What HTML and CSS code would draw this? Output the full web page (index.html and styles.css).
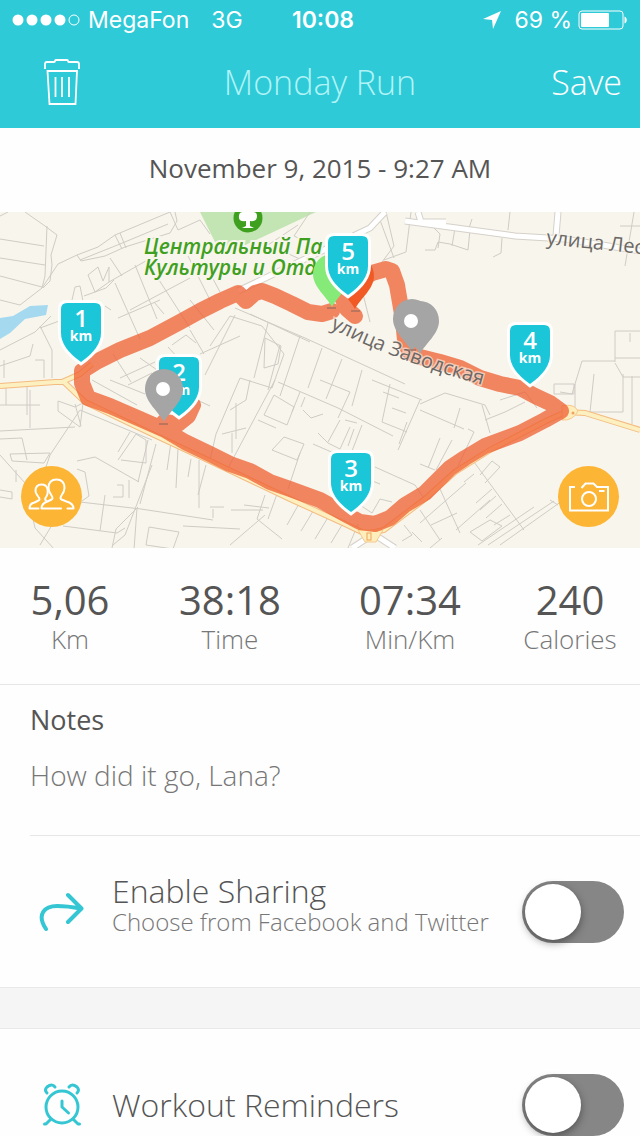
FILE: index.html
```html
<!DOCTYPE html>
<html lang="en">
<head>
    <meta charset="UTF-8">
    <meta name="viewport" content="width=device-width, initial-scale=1.0">
    <title>Monday Run</title>
    <link rel="stylesheet" href="styles.css">
</head>
<body>

    <div class="screen">
        <header class="header">
            <div class="status-bar">
                <div class="status-left">
                    <svg class="signal" width="68" height="12" viewBox="0 0 68 12">
                        <circle cx="6" cy="6" r="5.5"/>
                        <circle cx="20" cy="6" r="5.5"/>
                        <circle cx="34" cy="6" r="5.5"/>
                        <circle cx="48" cy="6" r="5.5"/>
                        <circle class="signal-empty" cx="62" cy="6" r="5"/>
                    </svg>
                    <span>MegaFon</span>
                    <span class="network">3G</span>
                </div>
                <span class="clock">10:08</span>
                <div class="status-right">
                    <svg width="20" height="20" viewBox="0 0 20 20"><path d="M19 1 11 19 10 10 1 9z" fill="#fff"/></svg>
                    <span class="percent">69 %</span>
                    <svg width="50" height="20" viewBox="0 0 50 20">
                        <rect x="1" y="1" width="44" height="18" rx="3" fill="none" stroke="#fff"/>
                        <rect x="3" y="3" width="28" height="14" rx="1" fill="#fff"/>
                        <path d="M46.500 6.500c3 1 3 6 0 7z" fill="#fff"/>
                    </svg>
                </div>
            </div>
            <nav class="nav">
                <button class="nav-delete" aria-label="Delete workout">
                    <svg width="36" height="48" viewBox="0 0 36 48" fill="none" stroke="#fff" stroke-width="1.800">
                        <path d="M1 11V6q0-2 2-2h7q1 0 1-1t1-1h11q1 0 1 1t1 1h8q2 0 2 2v5"/>
                        <path d="M3.500 13h29.500L31.500 46h-26z"/>
                        <path d="M11.500 19v20M18 19v20M25 19v20"/>
                    </svg>
                </button>
                <h1 class="nav-title">Monday Run</h1>
                <button class="nav-save">Save</button>
            </nav>
        </header>

        <p class="date">November 9, 2015 - 9:27 AM</p>

        <section class="map">
            <svg class="map-canvas" viewBox="0 212 640 336">
                <defs>
                    <path id="shield" d="M-14-59H14q6 0 6 6V-29Q20-14 0 0Q-20-14-20-29V-53q0-6 6-6z"/>
                    <path id="drop" d="M0 0C-5-10-19-20-19-33A19 20 0 0 1 19-33C19-20 5-10 0 0z"/>
                    <path id="zavodskaya" d="M330 328Q400 363 490 387"/>
                </defs>

                <path class="park" d="M200 212l22 44 94-44z"/>
                <path class="water" d="M0 318l13-2 17-10 18-1-2 10-21 4-15 14-10 6z"/>

                <!-- side streets -->
                <g class="streets">
                    <path d="M0 216l8-4M25 212l20 14 12 9-6 20 1 10-2 16-7 7M47 226l-2 50-3 12-22 17-20-5M0 239l44 7M0 258l45 7M0 276l42 11"/>
                    <path d="M42 288l16-24 19-9 21-8 17-12 55-23M77 255l4 6 24-5 20-9 45-14 7-12-2-9M80 260l40-16 48-20M115 235l7 14M120 233l6 15M170 212l8 18 22-10 10 14M110 258l12 18"/>
                    <path d="M88 275l10-8 5 14 6-14 0 15-14 10zM72 300l3-13 5-1 3 15M84 296l22-8 8-8M109 282l70-40M115 283l25 56M135 265l22 54M105 306l6 4M0 350l35-18 16-16M40 326l12 24v28M40 328l22-8M0 366l30-10 3-12M35 360h9v18M4 360v18M130 310l60-32M150 266l40 62M180 240l30 60M118 318l42-18"/>
                    <path d="M154 302l10 12M190 300l24 30M204 262l16 30M113 354l18 28M168 347l24 26M172 345l14-10 10 8M120 378l35-16M200 354l40-18M205 375l30-60M140 358l40 28M190 330l14 24"/>
                    <path d="M210 346l20-30 32 10 22 28-12 34-32-10M265 338l16 8-3 18-14 4zM235 308l70 30 100 46M250 314l60 28M280 345l-12 45M268 323l-14 55M300 336l-20 60M322 348l-14 40M342 359l-16 40M362 370l-10 36"/>
                    <path d="M310 212l-16 24 25 12M298 225l-45 30M280 250l22 10 30-14M330 235l25 12M360 282l10 40M386 212l8 34-12 16M380 220l14 38M384 260l22-8 5-40M425 250h10l3-8 12 2 18 6 2-20M432 226l8 8-2 14M455 228l-3 18M468 231l4-12M502 238l-1 15-8 4M508 230l2-18M634 212l-9 54M620 226h20"/>
                    <path d="M615 362v-31h25M630 333v9M615 358h25M615 363l8 14h17M582 361h33M582 361l-7 23M594 374l-4 38h33v-38M575 384l-3 10-12-2M554 384h20v10h-20zM575 384v27M632 376v48M0 405h40M6 384v21M27 382v33M30 390v38M0 431l75-4M58 401l17 6 8-4-3 24-22-16zM0 439l22-1 5 22M80 410l-30 45-4 12M10 454l40-1-6 10-32-2zM16 470v12"/>
                    <path d="M0 455l25 28 10 45 20 22M52 525l-12 20M0 490l12 2v7l-12-2M75 404l6 22M92 380l45 25M110 380l35 14M128 385l24-12M150 378l60 28M80 410l72 30M130 432l-12 20M118 460l18-26 10 6v23l-25-3M148 440l-10 42M156 444l-16 60M77 469l8 3 4 24-7 5M77 461l18-4 44 25M80 502l61 7 72 11M63 526l54 7 8-5M105 495l-5 36M117 485h6v12h-10M129 480v18M138 507l-22 22-4 19M152 465l-27 70-12 10M137 508l-3 42M146 545l3-18 30 5-6 17zM171 442l-4 28M178 448l-2 40M191 459l-3 18M199 460v48M206 465l-8 30M213 509v9M183 526l57 3"/>
                    <path d="M240 378l-24 56-6 26M275 380l-48 90M250 380l-4 20-16 10M236 403v36M222 434l24-6M232 433v20M274 395l20 12-7 18-23-10zM258 420l18 8M300 392l-8 20M320 380l30 12-12 26M278 382l60 26 55 28M303 410l8 8 12-4M305 397l-4 10M340 420l-12 22M345 420l12 3M318 433l10 10 12 6 10-22M348 446l6-17M284 437l20 7-7 16-25-10zM300 453l-12 36M313 444l30 13M362 425l-10 26M372 380l50 20M390 384l-8 38 25 10M383 392l16 6M392 408l14 5M420 400l-22 50M407 422l-8 22"/>
                    <path d="M375 467l40 18 8 12M370 480l10 4M265 495l-8 24 25 20M231 510h32M265 515l-35 30M210 507h14M244 505l25 3M277 494l-9 25M300 502l-13 23M315 508l-14 23M330 514l-15 25M345 520l-14 23M358 524l-10 24M360 505l12 8 8-14 12 3M404 525l8 10-10 6M412 532l10 10"/>
                    <path d="M420 404l25-11 40 12 5 10M420 410l44 19M460 408l-6 20M482 405l8 28M485 420l20-8 20-10M468 429l6 3-16 34M440 438l-12 30M452 440l-16 30M420 464l15 6M474 462l50 68M440 489l20 44M420 523l46-40M431 525l26-12M456 530l34-30M464 482l10-8M476 503l16-14M480 510l16-14M486 518l16-14M494 525l16-10M478 545l56-38M488 545l66-44M500 545l62-44M470 532l20-12 12 6-20 15z"/>
                    <path d="M420 510l20 30M430 548l12-10M480 475l12-14 8 6-15 16M550 500l8 5M500 400l25-8 12 16"/>
                </g>

                <!-- main roads -->
                <path class="road-edge" d="M238 291L370 228 385 212M405 221l110 15 50 3 75 12M558 212l-2 24M418 212l3 10h25M372 535l-20 13M375 535l20 13"/>
                <path class="road" d="M238 291L370 228 385 212M405 221l110 15 50 3 75 12M558 212l-2 24M418 212l3 10h25M372 535l-20 13M375 535l20 13"/>
                <path class="highway-edge" d="M0 386L55 382 64 382 85 402 150 433 210 461 290 499 345 524 366 534 384 530 425 499 455 472 490 450 548 420 566 412 585 413 640 430M62 382L80 374 92 364"/>
                <path class="highway" d="M0 386L55 382 64 382 85 402 150 433 210 461 290 499 345 524 366 534 384 530 425 499 455 472 490 450 548 420 566 412 585 413 640 430M62 382L80 374 92 364"/>
                <path class="junction" d="M358 530h25l-7 12h-11zM562 406q12-3 16 5-5 10-16 9z"/>
                <rect x="367" y="533" width="4" height="7" fill="none" stroke="#f0a35c"/>
                <circle cx="573" cy="413" r="1.500" fill="#f0a35c"/>

                <text class="label" x="546" y="244" transform="rotate(6 546 244)">улица Лес</text>

                <path class="route" d="M332 311L322 314 308 312 292 304 275 296 262 291 255 293 246 301 238 293 220 301 200 311 180 322 150 338 120 350 98 361 82 371 82 383 88 398 110 406 140 419 165 430 185 442 210 454 230 464 250 471 270 482 290 489 320 500 345 514 360 522 375 524 390 518 405 505 425 493 450 468 465 458 485 446 520 433 545 420 561 411 550 403 535 396 520 388 500 384 480 378 460 368 440 362 420 357 409 352 405 340 403 320 397 285 392 271 386 269 372 273 355 283 342 297 347 309 355 316M164 422L178 424 188 416 193 405"/>

                <text class="label"><textPath href="#zavodskaya">улица Заводская</textPath></text>

                <g class="park-label">
                    <circle cx="248" cy="218" r="14.500"/>
                    <path d="M246 226v-5q-8 1-7-5 0-4 4-4 1-5 5-5t5 5q4 0 4 4 0 6-7 5v5l4 2h-12z" fill="#fff"/>
                    <text x="144" y="254">Центральный Па</text>
                    <text x="144" y="275">Культуры и Отд</text>
                </g>

                <use class="pin-start" href="#drop" x="332" y="307"/>
                <use class="pin-finish" href="#drop" x="355" y="309"/>

                <g class="km" transform="translate(81 362)">
                    <use href="#shield"/>
                    <text class="km-number" y="-35">1</text>
                    <text class="km-unit" y="-21">km</text>
                </g>
                <g class="km" transform="translate(179 416)">
                    <use href="#shield"/>
                    <text class="km-number" y="-35">2</text>
                    <text class="km-unit" y="-21">km</text>
                </g>
                <g class="km" transform="translate(351 512)">
                    <use href="#shield"/>
                    <text class="km-number" y="-35">3</text>
                    <text class="km-unit" y="-21">km</text>
                </g>
                <g class="km" transform="translate(530 384)">
                    <use href="#shield"/>
                    <text class="km-number" y="-35">4</text>
                    <text class="km-unit" y="-21">km</text>
                </g>
                <g class="km" transform="translate(348 295)">
                    <use href="#shield"/>
                    <text class="km-number" y="-35">5</text>
                    <text class="km-unit" y="-21">km</text>
                </g>

                <g class="pin-photo">
                    <use href="#drop" x="164" y="422"/>
                    <use href="#drop" x="420" y="354"/>
                    <use href="#drop" x="412" y="352"/>
                    <circle cx="163" cy="389" r="7"/>
                    <circle cx="411" cy="321" r="7"/>
                    <path d="M159 424h9M407 350h9M327 308h9M351 311h9" stroke="#9b6a5c" stroke-width="2" opacity=".6"/>
                </g>
            </svg>

            <div class="map-actions">
                <button class="map-button" aria-label="Tag friends">
                    <svg width="48" height="48" viewBox="0 0 48 48" fill="none" stroke="#fff" stroke-width="2" stroke-linejoin="round" stroke-linecap="round">
                        <path d="M33 35.500h-19.500q0-5 6-7l4-2q2-1 0-4-3-4-3-7.500 0-8.500 8-8.500t8 8.500q0 3.500-3 7.500-2 3 0 4l5 2q7 2 7 7h-6"/>
                        <path d="M10.500 35.500H1.500q0-5 5-6l4-2q2-1 0-3.500-3-4-3-6 0-6.500 6-6.500 5 0 6 4.500 1 5-2 9-1 2 1 3"/>
                    </svg>
                </button>
                <button class="map-button" aria-label="Add photo">
                    <svg width="48" height="48" viewBox="0 0 48 48" fill="none" stroke="#fff" stroke-width="2">
                        <path d="M10 14H5v23.500h38V14H32l-3.500-3.500h-8L16.500 15"/>
                        <circle cx="24" cy="26" r="7"/>
                        <path d="M34 18h5.500"/>
                    </svg>
                </button>
            </div>
        </section>

        <dl class="stats">
            <div class="stat"><dt>Km</dt><dd>5,06</dd></div>
            <div class="stat"><dt>Time</dt><dd>38:18</dd></div>
            <div class="stat"><dt>Min/Km</dt><dd>07:34</dd></div>
            <div class="stat"><dt>Calories</dt><dd>240</dd></div>
        </dl>

        <section class="notes">
            <label class="notes-label" for="notes">Notes</label>
            <input class="notes-input" id="notes" type="text" placeholder="How did it go, Lana?">
        </section>

        <div class="option">
            <svg class="option-icon" width="48" height="48" viewBox="0 0 48 48">
                <path d="M9 41C-1 26 8 18 20 18q10 0 24 2.500M31 7l13.500 13.500L31 34"/>
            </svg>
            <label class="option-text" for="sharing">
                <span class="option-title">Enable Sharing</span>
                <span class="option-hint">Choose from Facebook and Twitter</span>
            </label>
            <input class="toggle" id="sharing" type="checkbox" role="switch">
        </div>

        <div class="divider"></div>

        <div class="option">
            <svg class="option-icon thin" width="48" height="48" viewBox="0 0 48 48">
                <circle cx="25" cy="26" r="16"/>
                <path d="M25 20v6l6.500 6M14 38l-5 5H7.500M36 38l5 5h1.500"/>
                <path d="M10 12q-3-3 0-6 5-4 8 0M40 12q3-3 0-6-5-4-8 0"/>
            </svg>
            <label class="option-text" for="reminders">
                <span class="option-title">Workout Reminders</span>
            </label>
            <input class="toggle" id="reminders" type="checkbox" role="switch">
        </div>
    </div>

</body>
</html>
```

FILE: styles.css
```css
* {
    margin: 0;
    padding: 0;
    box-sizing: border-box;
}

body {
    font-family: "Open Sans", "Noto Sans", sans-serif;
    color: #555;
    background-color: #fefefe;
}

button {
    background: none;
    border: none;
    color: white;
    font-family: inherit;
    cursor: pointer;
}

svg {
    display: block;
}

.screen {
    height: 100vh;
    overflow-y: auto;
    scrollbar-width: none;
}

/* header */
.header {
    background-color: #2ecad7;
    color: white;
}

.status-bar {
    display: grid;
    grid-template-columns: 1fr auto 1fr;
    align-items: center;
    height: 40px;
    padding: 0 12px;
    font-family: Inter, sans-serif;
    font-size: 23px;
}

.status-left,
.status-right {
    display: flex;
    align-items: center;
    gap: 8px;
}

.status-right {
    justify-content: flex-end;
    gap: 6px;
}

.status-right svg:first-child {
    margin-right: 6px;
}

.signal {
    fill: white;
}

.signal-empty {
    fill: none;
    stroke: white;
}

.network {
    margin-left: 14px;
}

.clock {
    font-weight: 600;
    padding-left: 6px;
}

.nav {
    display: grid;
    grid-template-columns: 1fr auto 1fr;
    align-items: center;
    height: 88px;
    padding: 0 18px 4px;
}

.nav-delete {
    justify-self: start;
    margin-left: 26px;
}

.nav-title,
.nav-save {
    font-size: 34px;
    font-weight: 300;
    line-height: 44px;
}

.nav-title {
    color: #b0f3f6;
}

.nav-save {
    justify-self: end;
}

.date {
    padding: 22px 0 26px;
    font-size: 26px;
    line-height: 36px;
    text-align: center;
}

/* map */
.map {
    position: relative;
    background-color: #f8f5ec;
}

.map-canvas {
    width: 100%;
}

.park { fill: #c3e5b3; }
.water { fill: #a5d9ef; }
.junction { fill: #fdeebb; stroke: #f6c98c; }

.streets {
    fill: none;
    stroke: #cfccc5;
    stroke-width: 1;
}

.road-edge {
    fill: none;
    stroke: #d5d1ca;
    stroke-width: 7;
}

.road {
    fill: none;
    stroke: white;
    stroke-width: 5;
}

.highway-edge {
    fill: none;
    stroke: #f4bb80;
    stroke-width: 6;
}

.highway {
    fill: none;
    stroke: #fdf0c0;
    stroke-width: 4;
}

.route {
    fill: none;
    stroke: #ef5f32;
    stroke-width: 16;
    stroke-linejoin: round;
    stroke-linecap: round;
    opacity: 0.75;
}

.label {
    font-size: 20px;
    fill: #6b6866;
    stroke: #f8f5ec;
    stroke-width: 3;
    stroke-opacity: 0.6;
    paint-order: stroke;
}

.park-label {
    font-size: 21px;
    font-weight: 600;
    font-style: italic;
    fill: #3fa01f;
}

.park-label text {
    stroke: #f8f5ec;
    stroke-width: 4;
    paint-order: stroke;
}

.pin-start { fill: #85ea78; }
.pin-finish { fill: #f15a24; }
.pin-photo { fill: #a5a5a5; }
.pin-photo circle { fill: white; }

.km use {
    fill: #1bc6d8;
    stroke: white;
    stroke-width: 6;
    paint-order: stroke;
}

.km text {
    fill: white;
    text-anchor: middle;
}

.km-number {
    font-size: 24px;
    font-weight: 600;
}

.km-unit {
    font-size: 14px;
    font-weight: 700;
}

.map-actions {
    position: absolute;
    left: 21px;
    right: 21px;
    bottom: 21px;
    display: flex;
    justify-content: space-between;
}

.map-button {
    display: flex;
    justify-content: center;
    align-items: center;
    width: 61px;
    height: 61px;
    border-radius: 50%;
    background-color: #fdb535;
}

/* stats */
.stats {
    display: grid;
    grid-template-columns: 7fr 9fr 9fr 7fr;
    padding: 30px 0 28px;
    border-bottom: 1px solid #e6e6e6;
}

.stat {
    display: flex;
    flex-direction: column-reverse;
    text-align: center;
}

.stat dt {
    font-size: 26px;
    font-weight: 300;
    line-height: 34px;
    color: #777;
}

.stat dd {
    font-size: 40px;
    font-weight: 500;
    line-height: 44px;
}

/* notes */
.notes {
    margin-left: 30px;
    padding: 17px 0 40px;
    border-bottom: 1px solid #e6e6e6;
}

.notes-label {
    display: block;
    font-size: 27px;
    font-weight: 500;
    line-height: 36px;
}

.notes-input {
    display: block;
    width: 100%;
    height: 40px;
    margin-top: 17px;
    border: none;
    outline: none;
    background: none;
    font-family: inherit;
    font-size: 28px;
    font-weight: 300;
    color: #555;
}

.notes-input::placeholder {
    color: #777;
    opacity: 1;
}

/* options */
.option {
    display: flex;
    align-items: center;
    min-height: 151px;
    padding: 38px 16px 37px 37px;
}

.option-icon {
    fill: none;
    stroke: #35c6d3;
    stroke-width: 4;
    stroke-linecap: round;
    stroke-linejoin: round;
}

.option-icon.thin {
    stroke-width: 3;
}

.option-text {
    flex: 1;
    margin-left: 27px;
}

.option-title,
.option-hint {
    display: block;
    font-weight: 300;
}

.option-title {
    font-size: 32px;
    line-height: 34px;
}

.option-hint {
    margin-bottom: 14px;
    font-size: 24px;
    line-height: 28px;
    color: #777;
}

.toggle {
    appearance: none;
    width: 102px;
    height: 62px;
    padding: 3px;
    border-radius: 31px;
    background-color: #868686;
    cursor: pointer;
}

.toggle::before {
    content: "";
    display: block;
    width: 56px;
    height: 56px;
    border-radius: 50%;
    background-color: white;
    box-shadow: 0 3px 8px rgba(0, 0, 0, 0.4);
}

.toggle:checked {
    background-color: #2ecad7;
}

.toggle:checked::before {
    margin-left: 40px;
}

.divider {
    height: 42px;
    background-color: #f5f5f5;
    border-top: 1px solid #e9e9e9;
    border-bottom: 1px solid #e9e9e9;
}
```
